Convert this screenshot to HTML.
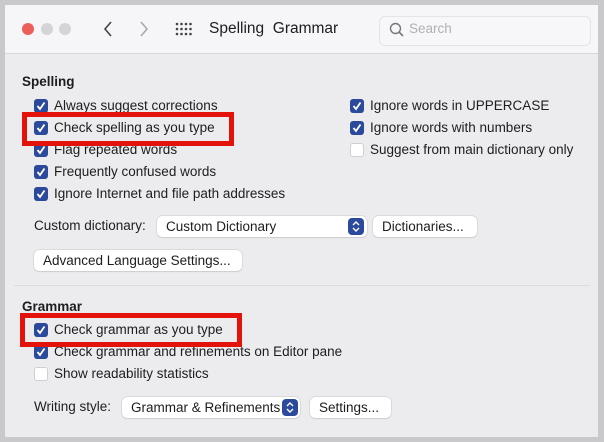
<!DOCTYPE html>
<html><head><meta charset="utf-8"><style>
*{margin:0;padding:0;box-sizing:border-box}
body{width:604px;height:442px;background:#c9c9cb;position:relative;overflow:hidden;font-family:"Liberation Sans",sans-serif;color:#1d1d1f;font-size:13.5px}
.win{position:absolute;left:5px;top:5px;width:593px;height:432px;background:#ececee}
.tb{position:absolute;left:0;top:0;width:593px;height:49px;background:#f6f5f7;border-bottom:1px solid #d8d8da}
.a{position:absolute;white-space:nowrap}
.cb{position:absolute;width:14px;height:14px;border-radius:3px;background:#2c4a9c}
.cb svg{position:absolute;left:2px;top:2px}
.cb.off{background:#fff;border:1px solid #cfcfd3}
.t{position:absolute;white-space:nowrap;line-height:16px}
.btn{position:absolute;height:21px;background:#fff;border-radius:5px;box-shadow:0 0 0 .5px #c8c8cc,0 1px 1px rgba(0,0,0,.12);line-height:21px;padding-left:9px;white-space:nowrap}
.st{position:absolute;width:16px;height:17px;top:2px;right:3px;background:#2c4a9c;border-radius:4px}
.red{position:absolute;border:5px solid #e3120b}
</style></head><body>
<div class="win">
<div class="tb">
<div class="a" style="left:17px;top:18px;width:12px;height:12px;border-radius:6px;background:#ec5f59"></div>
<div class="a" style="left:36px;top:18px;width:12px;height:12px;border-radius:6px;background:#d4d3d6"></div>
<div class="a" style="left:54px;top:18px;width:12px;height:12px;border-radius:6px;background:#d4d3d6"></div>
<svg class="a" style="left:97px;top:15px" width="12" height="18"><path d="M9 2 L3 9 L9 16" fill="none" stroke="#444" stroke-width="1.6"/></svg>
<svg class="a" style="left:133px;top:15px" width="12" height="18"><path d="M3 2 L9 9 L3 16" fill="none" stroke="#aaa" stroke-width="1.6"/></svg>
<svg class="a" style="left:170px;top:17px" width="18" height="14" fill="#444"><circle cx="2" cy="2" r="1.3"/><circle cx="6.5" cy="2" r="1.3"/><circle cx="11" cy="2" r="1.3"/><circle cx="15.5" cy="2" r="1.3"/><circle cx="2" cy="7" r="1.3"/><circle cx="6.5" cy="7" r="1.3"/><circle cx="11" cy="7" r="1.3"/><circle cx="15.5" cy="7" r="1.3"/><circle cx="2" cy="12" r="1.3"/><circle cx="6.5" cy="12" r="1.3"/><circle cx="11" cy="12" r="1.3"/><circle cx="15.5" cy="12" r="1.3"/></svg>
<div class="t" style="left:204px;top:15px;font-size:15.5px;line-height:18px">Spelling&nbsp; Grammar</div>
<div class="a" style="left:374px;top:11px;width:212px;height:30px;background:#f7f6f8;border:1px solid #e4e4e6;border-radius:6px"></div>
<svg class="a" style="left:384px;top:17px" width="16" height="16"><circle cx="6.5" cy="6.5" r="5" fill="none" stroke="#777" stroke-width="1.4"/><path d="M10 10 L14 14" stroke="#777" stroke-width="1.6"/></svg>
<div class="t" style="left:404px;top:16px;color:#b0b0b3">Search</div>
</div>
</div>
<div class="t" style="left:22px;top:74px;font-weight:bold">Spelling</div>

<div class="cb" style="left:34px;top:99px"><svg width="10" height="10"><path d="M1.5 5 L4 8 L8.5 1.5" fill="none" stroke="#fff" stroke-width="1.8"/></svg></div><div class="t" style="left:54px;top:98px">Always suggest corrections</div>
<div class="cb" style="left:34px;top:121px"><svg width="10" height="10"><path d="M1.5 5 L4 8 L8.5 1.5" fill="none" stroke="#fff" stroke-width="1.8"/></svg></div><div class="t" style="left:54px;top:120px">Check spelling as you type</div>
<div class="cb" style="left:34px;top:143px"><svg width="10" height="10"><path d="M1.5 5 L4 8 L8.5 1.5" fill="none" stroke="#fff" stroke-width="1.8"/></svg></div><div class="t" style="left:54px;top:142px">Flag repeated words</div>
<div class="cb" style="left:34px;top:165px"><svg width="10" height="10"><path d="M1.5 5 L4 8 L8.5 1.5" fill="none" stroke="#fff" stroke-width="1.8"/></svg></div><div class="t" style="left:54px;top:164px">Frequently confused words</div>
<div class="cb" style="left:34px;top:187px"><svg width="10" height="10"><path d="M1.5 5 L4 8 L8.5 1.5" fill="none" stroke="#fff" stroke-width="1.8"/></svg></div><div class="t" style="left:54px;top:186px">Ignore Internet and file path addresses</div>

<div class="cb" style="left:350px;top:99px"><svg width="10" height="10"><path d="M1.5 5 L4 8 L8.5 1.5" fill="none" stroke="#fff" stroke-width="1.8"/></svg></div><div class="t" style="left:370px;top:98px">Ignore words in UPPERCASE</div>
<div class="cb" style="left:350px;top:121px"><svg width="10" height="10"><path d="M1.5 5 L4 8 L8.5 1.5" fill="none" stroke="#fff" stroke-width="1.8"/></svg></div><div class="t" style="left:370px;top:120px">Ignore words with numbers</div>
<div class="cb off" style="left:350px;top:143px"></div><div class="t" style="left:370px;top:142px">Suggest from main dictionary only</div>

<div class="t" style="left:34px;top:218px">Custom dictionary:</div>
<div class="btn" style="left:157px;top:216px;width:210px">Custom Dictionary<div class="st"><svg width="16" height="17"><path d="M5 7 L8 4 L11 7 M5 10 L8 13 L11 10" fill="none" stroke="#fff" stroke-width="1.4"/></svg></div></div>
<div class="btn" style="left:373px;top:216px;width:104px">Dictionaries...</div>
<div class="btn" style="left:34px;top:250px;width:208px">Advanced Language Settings...</div>

<div class="a" style="left:14px;top:285px;width:576px;height:1px;background:#dcdcde"></div>
<div class="t" style="left:22px;top:299px;font-weight:bold">Grammar</div>
<div class="cb" style="left:34px;top:323px"><svg width="10" height="10"><path d="M1.5 5 L4 8 L8.5 1.5" fill="none" stroke="#fff" stroke-width="1.8"/></svg></div><div class="t" style="left:54px;top:322px">Check grammar as you type</div>
<div class="cb" style="left:34px;top:345px"><svg width="10" height="10"><path d="M1.5 5 L4 8 L8.5 1.5" fill="none" stroke="#fff" stroke-width="1.8"/></svg></div><div class="t" style="left:54px;top:344px">Check grammar and refinements on Editor pane</div>
<div class="cb off" style="left:34px;top:367px"></div><div class="t" style="left:54px;top:366px">Show readability statistics</div>

<div class="t" style="left:34px;top:399px">Writing style:</div>
<div class="btn" style="left:122px;top:397px;width:178px">Grammar &amp; Refinements<div class="st" style="right:2px"><svg width="16" height="17"><path d="M5 7 L8 4 L11 7 M5 10 L8 13 L11 10" fill="none" stroke="#fff" stroke-width="1.4"/></svg></div></div>
<div class="btn" style="left:310px;top:397px;width:81px">Settings...</div>

<div class="red" style="left:22px;top:112px;width:212px;height:34px"></div>
<div class="red" style="left:20px;top:313px;width:222px;height:34px"></div>
</body></html>
